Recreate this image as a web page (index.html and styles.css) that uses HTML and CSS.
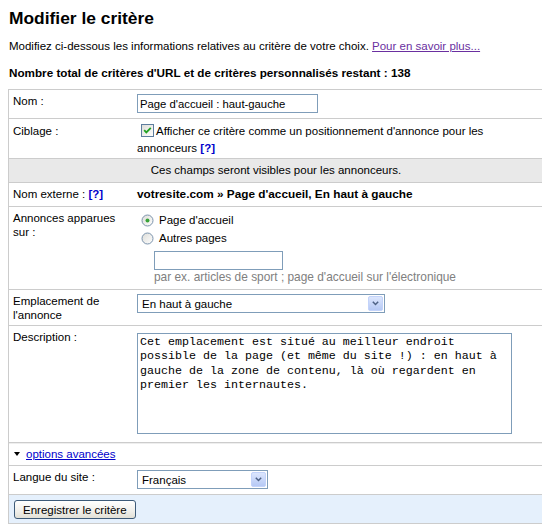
FILE: index.html
```html
<!DOCTYPE html>
<html lang="fr">
<head>
<meta charset="utf-8">
<title>Modifier le critère</title>
<link rel="stylesheet" href="styles.css">
</head>
<body>
<h1 class="title">Modifier le critère</h1>
<p class="intro">Modifiez ci-dessous les informations relatives au critère de votre choix. <a href="#" class="more">Pour en savoir plus...</a></p>
<p class="total">Nombre total de critères d'URL et de critères personnalisés restant : 138</p>
<table class="form">
  <tr>
    <th>Nom :</th>
    <td><input class="text name" type="text" value="Page d'accueil : haut-gauche"></td>
  </tr>
  <tr class="targeting">
    <th>Ciblage :</th>
    <td><div class="line"><span class="check"><svg width="13" height="13" viewBox="0 0 13 13"><defs><linearGradient id="cg" x1="0" y1="0" x2="1" y2="1"><stop offset="0" stop-color="#dcdcd7"/><stop offset="1" stop-color="#ffffff"/></linearGradient></defs><rect x="0.5" y="0.5" width="12" height="12" fill="url(#cg)" stroke="#5d7d9e"/><path d="M3.2 6.2 L5.3 8.4 L9.8 3.8" fill="none" stroke="#21a121" stroke-width="1.8"/></svg></span>Afficher ce critère comme un positionnement d'annonce pour les</div><div class="line">annonceurs <a href="#" class="help">[?]</a></div></td>
  </tr>
  <tr class="notice">
    <td colspan="2">Ces champs seront visibles pour les annonceurs.</td>
  </tr>
  <tr>
    <th>Nom externe : <a href="#" class="help">[?]</a></th>
    <td class="strong">votresite.com » Page d'accueil, En haut à gauche</td>
  </tr>
  <tr>
    <th>Annonces apparues sur :</th>
    <td>
      <div class="radio-line"><span class="radio"><svg width="13" height="13" viewBox="0 0 13 13"><defs><linearGradient id="rg" x1="0" y1="0" x2="1" y2="1"><stop offset="0" stop-color="#dcdcd7"/><stop offset="1" stop-color="#ffffff"/></linearGradient></defs><circle cx="6.5" cy="6.5" r="5.5" fill="url(#rg)" stroke="#7b93ad"/><circle cx="6.5" cy="6.5" r="2" fill="#3aa33a"/></svg></span>Page d'accueil</div>
      <div class="radio-line"><span class="radio"><svg width="13" height="13" viewBox="0 0 13 13"><circle cx="6.5" cy="6.5" r="5.5" fill="url(#rg)" stroke="#7b93ad"/></svg></span>Autres pages</div>
      <input class="text pages" type="text" value="">
      <div class="hint">par ex. articles de sport ; page d'accueil sur l'électronique</div>
    </td>
  </tr>
  <tr class="placement">
    <th>Emplacement de l'annonce</th>
    <td>
      <div class="select place"><select><option>En haut à gauche</option></select><span class="arrow"><svg width="7" height="5" viewBox="0 0 7 5"><path d="M0.8 0.8 L3.5 3.5 L6.2 0.8" fill="none" stroke="#4d6185" stroke-width="1.5"/></svg></span></div>
    </td>
  </tr>
  <tr>
    <th>Description :</th>
    <td><textarea class="desc">Cet emplacement est situé au meilleur endroit possible de la page (et même du site !) : en haut à gauche de la zone de contenu, là où regardent en premier les internautes.</textarea></td>
  </tr>
  <tr class="advanced">
    <td colspan="2"><span class="tri"></span><a href="#" class="adv">options avancées</a></td>
  </tr>
  <tr>
    <th>Langue du site :</th>
    <td>
      <div class="select lang"><select><option>Français</option></select><span class="arrow"><svg width="7" height="5" viewBox="0 0 7 5"><path d="M0.8 0.8 L3.5 3.5 L6.2 0.8" fill="none" stroke="#4d6185" stroke-width="1.5"/></svg></span></div>
    </td>
  </tr>
  <tr class="actions">
    <td colspan="2"><button class="btn" type="button">Enregistrer le critère</button></td>
  </tr>
</table>
</body>
</html>
```

FILE: styles.css
```css
body {
  margin: 8px;
  font-family: "Liberation Sans", Arial, sans-serif;
  font-size: 11.5px;
  color: #000;
  background: #fff;
}

.title {
  font-size: 17.4px;
  font-weight: bold;
  margin: 0 0 0 1px;
  line-height: 20px;
}

.intro {
  margin: 11px 0 0 1px;
  line-height: 15px;
}

.more {
  color: #6a2fa0;
}

.total {
  margin: 11px 0 0 1px;
  font-weight: bold;
  font-size: 11.7px;
  line-height: 15px;
}

.form {
  margin-top: 9px;
  width: 536px;
  border-collapse: collapse;
  border: 1px solid #cccccc;
}

.form tr {
  border-bottom: 1px solid #cccccc;
}

.form th,
.form td {
  padding: 4px 4px 5px;
  line-height: 14px;
  vertical-align: top;
  text-align: left;
}

.form th {
  width: 116px;
  font-weight: normal;
}

.targeting th,
.targeting td {
  line-height: 17px;
  padding-bottom: 1px;
}

.line {
  white-space: nowrap;
}

.placement th,
.placement td {
  padding-bottom: 3px;
}

.help {
  color: #0000cc;
  text-decoration: none;
  font-weight: bold;
}

.strong {
  font-weight: bold;
  font-size: 11.8px;
}

.notice td {
  background: #e9e9e9;
  text-align: center;
}

.text {
  box-sizing: border-box;
  height: 19px;
  border: 1px solid #7f9db9;
  padding: 0 2px;
  font-family: "Liberation Sans", Arial, sans-serif;
  font-size: 11.3px;
  color: #000;
  margin: 0;
  vertical-align: top;
}

.name {
  width: 181px;
}

.pages {
  width: 129px;
  margin: 4px 0 0 17px;
  display: block;
}

.hint {
  color: #808080;
  margin-left: 17px;
  font-size: 11.9px;
  line-height: 14px;
}

.check {
  display: inline-block;
  width: 13px;
  height: 13px;
  margin: 0 2px 0 4px;
  vertical-align: -2px;
}

.check svg,
.radio svg {
  display: block;
}

.radio-line {
  height: 18px;
  display: flex;
  align-items: center;
}

.radio {
  width: 13px;
  height: 13px;
  margin: 0 5px 0 4px;
}

.select {
  display: inline-flex;
  box-sizing: border-box;
  height: 19px;
  border: 1px solid #7f9db9;
  background: #fff;
  vertical-align: top;
}

.select select {
  appearance: none;
  -webkit-appearance: none;
  flex: 1;
  min-width: 0;
  border: 0;
  margin: 0;
  padding: 0 4px;
  background: transparent;
  font-family: "Liberation Sans", Arial, sans-serif;
  font-size: 11.5px;
  color: #000;
  outline: none;
}

.arrow {
  width: 13px;
  margin: 1px;
  border: 1px solid #c3d3fa;
  border-radius: 2px;
  background: linear-gradient(#dce6fd, #b6c9f5);
  display: flex;
  align-items: center;
  justify-content: center;
}

.place {
  width: 248px;
}

.lang {
  width: 131px;
}

.desc {
  box-sizing: border-box;
  display: block;
  width: 375px;
  height: 101px;
  margin: 3px 0 3px;
  padding: 1px 2px;
  border: 1px solid #7f9db9;
  font-family: "Liberation Mono", "Courier New", monospace;
  font-size: 11.67px;
  line-height: 14.4px;
  color: #000;
  resize: none;
  overflow: hidden;
}

.advanced td {
  padding: 4px 4px 4px 5px;
  box-shadow: inset 0 1px 0 #eeeeee;
}

.tri {
  display: inline-block;
  width: 0;
  height: 0;
  border-left: 3.5px solid transparent;
  border-right: 3.5px solid transparent;
  border-top: 4px solid #000;
  vertical-align: 2px;
  margin-right: 6px;
}

.adv {
  color: #0000cc;
}

.actions td {
  background: #e5f0fc;
  padding: 5px 4px 4px 5px;
}

.btn {
  display: block;
  height: 19px;
  padding: 0 8px;
  border: 1px solid #3d5a78;
  border-radius: 3px;
  background: linear-gradient(#ffffff, #f0efea 60%, #e2e0d6);
  font-family: "Liberation Sans", Arial, sans-serif;
  font-size: 11.5px;
  color: #000;
  margin: 0;
}
```
